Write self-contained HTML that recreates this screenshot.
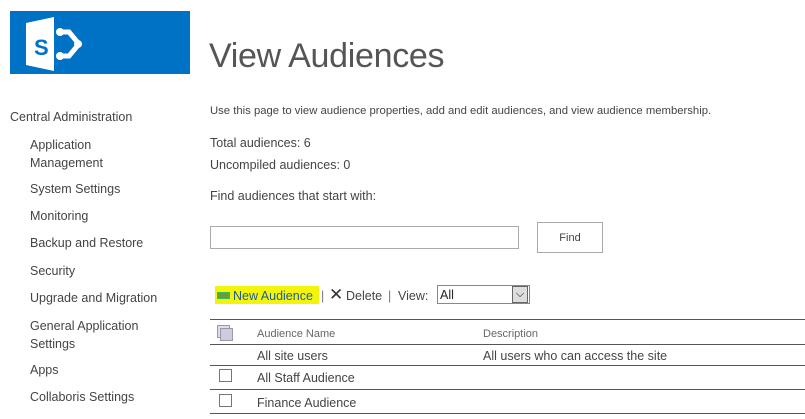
<!DOCTYPE html>
<html><head><style>
body{margin:0;width:805px;height:419px;background:#fff;position:relative;overflow:hidden;font-family:"Liberation Sans",sans-serif;color:#444;}
.a{position:absolute;white-space:nowrap;}
.n{font-size:12.5px;}
</style></head><body>
<div class="a" style="left:10px;top:11px;width:180px;height:63px;background:#0072c6;"></div>
<svg class="a" style="left:24px;top:15px" width="60" height="58" viewBox="0 0 60 58">
<polygon points="2,8 30,2 30,56 2,50" fill="#fff"/>
<text x="10" y="40" font-family="Liberation Sans" font-weight="bold" font-size="22" fill="#0072c6">S</text>
<path d="M35,17 L45,17 L55,29 L45,41 L35,41" stroke="#fff" stroke-width="5" fill="none"/>
<circle cx="36" cy="17" r="4" fill="#fff"/><circle cx="36" cy="41" r="4" fill="#fff"/><circle cx="54" cy="29" r="4" fill="#fff"/>
</svg>
<div class="a" style="left:209px;top:37px;font-size:34px;color:#555;letter-spacing:-0.3px">View Audiences</div>

<div class="a n" style="left:10px;top:110px">Central Administration</div>
<div class="a n" style="left:30px;top:136px;line-height:18px">Application<br>Management</div>
<div class="a n" style="left:30px;top:182px">System Settings</div>
<div class="a n" style="left:30px;top:209px">Monitoring</div>
<div class="a n" style="left:30px;top:236px">Backup and Restore</div>
<div class="a n" style="left:30px;top:264px">Security</div>
<div class="a n" style="left:30px;top:291px">Upgrade and Migration</div>
<div class="a n" style="left:30px;top:317px;line-height:18px">General Application<br>Settings</div>
<div class="a n" style="left:30px;top:363px">Apps</div>
<div class="a n" style="left:30px;top:390px">Collaboris Settings</div>

<div class="a" style="left:210px;top:105px;font-size:11.3px">Use this page to view audience properties, add and edit audiences, and view audience membership.</div>
<div class="a n" style="left:210px;top:136px">Total audiences: 6</div>
<div class="a n" style="left:210px;top:158px">Uncompiled audiences: 0</div>
<div class="a n" style="left:210px;top:189px">Find audiences that start with:</div>
<div class="a" style="left:210px;top:226px;width:307px;height:21px;border:1px solid #aaa"></div>
<div class="a" style="left:537px;top:222px;width:64px;height:29px;border:1px solid #aaa;font-size:11px;line-height:31px;text-align:center">Find</div>

<div class="a" style="left:215px;top:286px;width:104px;height:18px;background:#f4f40a"></div>
<div class="a" style="left:217px;top:292px;width:11px;height:5px;background:#6a9e2f;border:1px solid #3b6"></div>
<div class="a n" style="left:233px;top:289px;color:#1b5b9a">New Audience</div>
<div class="a n" style="left:321px;top:289px;color:#777">|</div>
<div class="a" style="left:329px;top:285px;font-size:17px;color:#333">✕</div>
<div class="a n" style="left:346px;top:289px">Delete</div>
<div class="a n" style="left:388px;top:289px;color:#777">|</div>
<div class="a n" style="left:398px;top:289px">View:</div>
<div class="a" style="left:437px;top:285px;height:19px;border:1px solid #888;font-size:12.5px;color:#222;line-height:18px;padding-left:2px;box-sizing:border-box;width:93px">All</div>
<div class="a" style="left:512px;top:286px;width:16px;height:17px;background:#ddd;border:1px solid #666;box-sizing:border-box;font-size:11px;text-align:center;line-height:15px;color:#000">⌵</div>

<div class="a" style="left:210px;top:319px;width:595px;height:1px;background:#555"></div>
<div class="a" style="left:217px;top:325px;width:11px;height:11px;border:1px solid #99a;background:#dde"></div>
<div class="a" style="left:220px;top:328px;width:11px;height:11px;border:1px solid #99a;background:#ccd"></div>
<div class="a" style="left:257px;top:328px;font-size:11px;color:#666">Audience Name</div>
<div class="a" style="left:483px;top:328px;font-size:11px;color:#666">Description</div>
<div class="a" style="left:210px;top:344px;width:595px;height:1px;background:#555"></div>
<div class="a n" style="left:257px;top:349px">All site users</div>
<div class="a n" style="left:483px;top:349px">All users who can access the site</div>
<div class="a" style="left:210px;top:365px;width:595px;height:1px;background:#555"></div>
<div class="a" style="left:219px;top:369px;width:11px;height:11px;border:1px solid #777"></div>
<div class="a n" style="left:257px;top:371px">All Staff Audience</div>
<div class="a" style="left:210px;top:389px;width:595px;height:1px;background:#555"></div>
<div class="a" style="left:219px;top:394px;width:11px;height:11px;border:1px solid #777"></div>
<div class="a n" style="left:257px;top:396px">Finance Audience</div>
<div class="a" style="left:210px;top:413px;width:595px;height:1px;background:#555"></div>
</body></html>
